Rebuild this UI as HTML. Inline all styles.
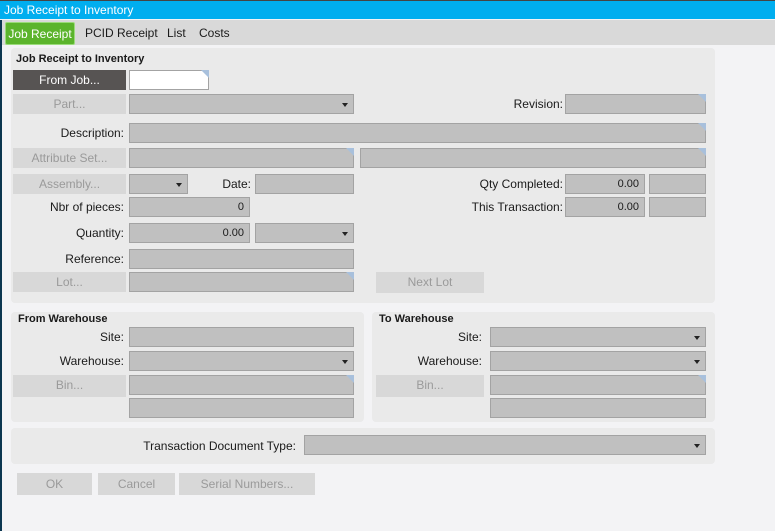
<!DOCTYPE html>
<html><head><meta charset="utf-8"><style>
*{box-sizing:border-box;margin:0;padding:0}
body{width:775px;height:531px;overflow:hidden;background:#f3f3f5;font-family:"Liberation Sans",Arial,sans-serif;font-size:12px;color:#1a1a1a;position:relative}
.a{position:absolute}
#title{left:0;top:0;width:775px;height:19px;background:#00aeef;border-top:1px solid #444;color:#fff;font-size:12px;line-height:18px;padding-left:4px}
#tabs{left:0;top:20px;width:775px;height:25px;background:#d9d9d9}
.tab{top:22px;height:23px;line-height:23px;font-size:12px}
#t1{left:5px;width:70px;background:#5bb42c;color:#fff;border:1px solid #9adb7a;text-align:center;border-radius:2px}
.panel{background:#eaeaea;border-radius:4px}
.h{font-weight:bold;font-size:11px}
.f{background:#c0c0c0;border:1px solid #a3a3a3;height:20px;text-align:right;padding-right:5px;line-height:18px;font-size:11px}
.c::after{content:"";position:absolute;right:-1px;top:-1px;border-top:8px solid #a8c0dc;border-left:8px solid transparent}
.s::after{content:"";position:absolute;right:5px;top:8px;border-top:4px solid #222;border-left:3px solid transparent;border-right:3px solid transparent}
.b{background:#d8d8d8;color:#9a9a9a;text-align:center;height:20px;line-height:20px;font-size:12px}
.l{text-align:right;height:20px;line-height:20px;font-size:12px}
#lb{left:0;top:20px;width:2px;height:511px;background:#0b3650}
</style></head><body>
<div class="a" id="title">Job Receipt to Inventory</div>
<div class="a" id="tabs"></div>
<div class="a tab" id="t1">Job Receipt</div>
<div class="a tab" style="left:85px">PCID Receipt</div>
<div class="a tab" style="left:167px">List</div>
<div class="a tab" style="left:199px">Costs</div>
<div class="a" id="lb"></div>

<div class="a panel" style="left:11px;top:48px;width:704px;height:255px"></div>
<div class="a h" style="left:16px;top:53px">Job Receipt to Inventory</div>
<div class="a b" style="left:13px;top:70px;width:113px;background:#575453;color:#fff">From Job...</div>
<div class="a f c" style="left:129px;top:70px;width:80px;background:#fff"></div>

<div class="a b" style="left:13px;top:94px;width:113px">Part...</div>
<div class="a f s" style="left:129px;top:94px;width:225px"></div>
<div class="a l" style="left:400px;top:94px;width:163px">Revision:</div>
<div class="a f c" style="left:565px;top:94px;width:141px"></div>

<div class="a l" style="left:13px;top:123px;width:111px">Description:</div>
<div class="a f c" style="left:129px;top:123px;width:577px"></div>

<div class="a b" style="left:13px;top:148px;width:113px">Attribute Set...</div>
<div class="a f c" style="left:129px;top:148px;width:225px"></div>
<div class="a f c" style="left:360px;top:148px;width:346px"></div>

<div class="a b" style="left:13px;top:174px;width:113px">Assembly...</div>
<div class="a f s" style="left:129px;top:174px;width:59px"></div>
<div class="a l" style="left:190px;top:174px;width:61px">Date:</div>
<div class="a f" style="left:255px;top:174px;width:99px"></div>
<div class="a l" style="left:400px;top:174px;width:163px">Qty Completed:</div>
<div class="a f" style="left:565px;top:174px;width:80px">0.00</div>
<div class="a f" style="left:649px;top:174px;width:57px"></div>

<div class="a l" style="left:13px;top:197px;width:111px">Nbr of pieces:</div>
<div class="a f" style="left:129px;top:197px;width:121px">0</div>
<div class="a l" style="left:400px;top:197px;width:163px">This Transaction:</div>
<div class="a f" style="left:565px;top:197px;width:80px">0.00</div>
<div class="a f" style="left:649px;top:197px;width:57px"></div>

<div class="a l" style="left:13px;top:223px;width:111px">Quantity:</div>
<div class="a f" style="left:129px;top:223px;width:121px">0.00</div>
<div class="a f s" style="left:255px;top:223px;width:99px"></div>

<div class="a l" style="left:13px;top:249px;width:111px">Reference:</div>
<div class="a f" style="left:129px;top:249px;width:225px"></div>

<div class="a b" style="left:13px;top:272px;width:113px">Lot...</div>
<div class="a f c" style="left:129px;top:272px;width:225px"></div>
<div class="a b" style="left:376px;top:272px;width:108px;height:21px">Next Lot</div>

<div class="a panel" style="left:11px;top:312px;width:353px;height:110px"></div>
<div class="a h" style="left:18px;top:313px">From Warehouse</div>
<div class="a l" style="left:13px;top:327px;width:111px">Site:</div>
<div class="a f" style="left:129px;top:327px;width:225px"></div>
<div class="a l" style="left:13px;top:351px;width:111px">Warehouse:</div>
<div class="a f s" style="left:129px;top:351px;width:225px"></div>
<div class="a b" style="left:13px;top:375px;width:113px;height:22px">Bin...</div>
<div class="a f c" style="left:129px;top:375px;width:225px"></div>
<div class="a f" style="left:129px;top:398px;width:225px"></div>

<div class="a panel" style="left:372px;top:312px;width:343px;height:110px"></div>
<div class="a h" style="left:379px;top:313px">To Warehouse</div>
<div class="a l" style="left:376px;top:327px;width:106px">Site:</div>
<div class="a f s" style="left:490px;top:327px;width:216px"></div>
<div class="a l" style="left:376px;top:351px;width:106px">Warehouse:</div>
<div class="a f s" style="left:490px;top:351px;width:216px"></div>
<div class="a b" style="left:376px;top:375px;width:108px;height:22px">Bin...</div>
<div class="a f c" style="left:490px;top:375px;width:216px"></div>
<div class="a f" style="left:490px;top:398px;width:216px"></div>

<div class="a panel" style="left:11px;top:428px;width:704px;height:36px"></div>
<div class="a l" style="left:100px;top:436px;width:196px">Transaction Document Type:</div>
<div class="a f s" style="left:304px;top:435px;width:402px"></div>

<div class="a b" style="left:17px;top:473px;width:75px;height:22px;line-height:22px">OK</div>
<div class="a b" style="left:98px;top:473px;width:77px;height:22px;line-height:22px">Cancel</div>
<div class="a b" style="left:179px;top:473px;width:136px;height:22px;line-height:22px">Serial Numbers...</div>
</body></html>
